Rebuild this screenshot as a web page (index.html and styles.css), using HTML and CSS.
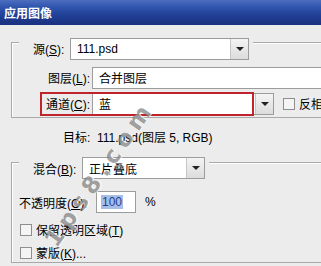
FILE: index.html
```html
<!DOCTYPE html>
<html>
<head>
<meta charset="utf-8">
<link rel="stylesheet" href="styles.css">
</head>
<body>
<div class="dialog">
  <div class="title">应用图像</div>
  <div class="content">
    <div class="group g1">
      <div class="head">
        <span class="hlabel">源(<u>S</u>):</span>
        <div class="field src"><span class="ftext">111.psd</span><span class="btn"><i></i></span></div>
      </div>
      <div class="row r-layer">
        <span class="lbl">图层(<u>L</u>):</span>
        <div class="field wide"><span class="ftext">合并图层</span></div>
      </div>
      <div class="row r-chan">
        <span class="lbl">通道(<u>C</u>):</span>
        <div class="field chan"><span class="ftext">蓝</span><span class="btn"><i></i></span></div>
        <span class="check"></span><span class="ctext">反相</span>
        <div class="redbox"></div>
      </div>
    </div>
    <div class="target">目标:&nbsp; 111.psd(图层 5, RGB)</div>
    <div class="group g2">
      <div class="head">
        <span class="hlabel">混合(<u>B</u>):</span>
        <div class="field blend"><span class="ftext">正片叠底</span><span class="btn"><i></i></span></div>
      </div>
      <div class="row r-opac">
        <span class="olbl">不透明度(<u>O</u>):</span>
        <div class="field num"><span class="sel">100</span></div>
        <span class="pct">%</span>
      </div>
      <div class="row r-cb">
        <span class="check"></span><span class="ctext">保留透明区域(<u>T</u>)</span>
      </div>
      <div class="row r-cb">
        <span class="check"></span><span class="ctext">蒙版(<u>K</u>)...</span>
      </div>
    </div>
    <div class="wm">1ps8.com</div>
  </div>
</div>
</body>
</html>
```
FILE: styles.css
```css
* { box-sizing: border-box; }
html, body { margin: 0; padding: 0; }
body {
  width: 321px; height: 266px; overflow: hidden;
  background: #ececec;
  font-family: "Liberation Sans", "Noto Sans CJK SC", sans-serif;
  font-size: 12px; color: #000;
}
u { text-decoration: underline; text-underline-offset: 1px; }
.dialog { width: 321px; height: 266px; position: relative; overflow: hidden; }
.title {
  height: 25px;
  background: linear-gradient(to bottom, #4d6fc0 0px, #3358b0 6px, #23429a 14px, #1b3585 22px, #1a3281 25px);
  color: #fff; font-weight: bold; font-size: 12px;
  font-family: "Noto Sans CJK SC", sans-serif;
  line-height: 25px; padding-left: 4px; letter-spacing: 0;
}
.content { position: relative; padding-top: 17px; }
.group {
  margin-left: 11px; width: 330px;
  border: 1px solid #a9a9a9;
  border-right: none;
  box-shadow: inset 1px 1px 0 #fff;
}
.head {
  display: inline-flex; align-items: center;
  background: #ececec;
  margin-left: 7px; padding: 0 4px 0 14px;
  height: 22px;
}
.g1 .head { margin-top: -9px; }
.g1 { padding-bottom: 2px; }
.hlabel { white-space: nowrap; }
.g1 .hlabel { width: 37px; }
.g2 .hlabel { width: 49px; }
.field {
  position: relative;
  height: 22px; background: #fff;
  border: 1px solid #9c9c9c;
  display: flex; align-items: center;
}
.ftext { padding-left: 6px; white-space: nowrap; }
.src { width: 179px; }
.wide { width: 240px; }
.chan { width: 182px; }
.blend { width: 123px; }
.btn {
  position: absolute; right: 0; top: 0; bottom: 0; width: 18px;
  background: linear-gradient(to bottom, #f4f4f4, #dcdcdc);
  border-left: 1px solid #c6c6c6;
  display: flex; align-items: center; justify-content: center;
}
.btn i {
  display: block; width: 0; height: 0;
  border-left: 4px solid transparent; border-right: 4px solid transparent;
  border-top: 4px solid #222;
}
.row { display: flex; align-items: center; height: 22px; position: relative; }
.lbl { width: 80px; text-align: right; padding-right: 2px; white-space: nowrap; }
.r-layer { margin-top: 7px; }
.r-chan { margin-top: 4px; }
.check {
  width: 12px; height: 12px; background: #f4f4f4;
  border: 1px solid #8e8e8e; margin-left: 9px; margin-right: 4px;
  flex: none;
}
.ctext { white-space: nowrap; }
.redbox {
  position: absolute; left: 28px; top: -1px; width: 214px; height: 24px;
  border: 2px solid #c0232b;
}
.target { height: 44px; padding-left: 63px; padding-top: 13px; line-height: 14px; white-space: nowrap; }
.g2 .head { margin-top: -10px; }
.g2 { height: 101px; }
.r-opac { margin-top: 12px; padding-left: 7px; }
.olbl { width: 77px; white-space: nowrap; }
.num { width: 40px; padding-left: 4px; }
.sel { background: #a6bde8; color: #1d3f92; padding: 0 1px; line-height: 14px; }
.pct { margin-left: 9px; }
.r-cb { height: 23px; }
.r-cb .check { margin-left: 8px; }
.r-cb:nth-of-type(3) { margin-top: 5px; }
.wm {
  position: absolute; left: 50px; top: 206px;
  font-family: "DejaVu Sans", sans-serif; font-weight: bold; font-size: 23px;
  letter-spacing: 6px;
  color: rgba(70,70,70,0.5);
  text-shadow: 1px 1px 0 rgba(255,255,255,0.8);
  transform: rotate(-55deg); transform-origin: left center;
  white-space: nowrap; pointer-events: none;
}
```
